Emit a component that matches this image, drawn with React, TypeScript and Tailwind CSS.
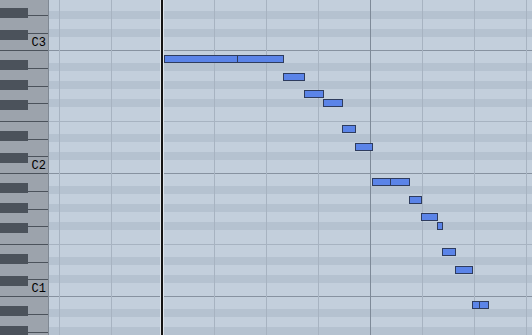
import React from "react";

// grid rows from the top: l = light row, d = black-key row, c = octave line, e = E-F line
const rows: [string, number][] = [
  ["l", 11], ["d", 8], ["l", 10], ["d", 8],
  ["l", 13], ["c", 1], ["l", 12], ["d", 8], ["l", 10], ["d", 8], ["l", 10], ["d", 8],
  ["l", 14], ["e", 1], ["l", 12], ["d", 8], ["l", 10], ["d", 8],
  ["l", 13], ["c", 1], ["l", 12], ["d", 8], ["l", 10], ["d", 8], ["l", 10], ["d", 8],
  ["l", 14], ["e", 1], ["l", 12], ["d", 8], ["l", 10], ["d", 8],
  ["l", 13], ["c", 1], ["l", 12], ["d", 8], ["l", 10], ["d", 8],
];

// white key boundaries on the keyboard
const keyLines = [0, 15, 33, 50, 68, 86, 103, 121, 139, 156, 173, 191, 209, 226, 244, 262, 279, 296, 314, 332, 335];
const labels: Record<number, string> = { 33: "C3", 156: "C2", 279: "C1" };
const blackKeys = [8, 30, 60, 80, 100, 131, 153, 183, 203, 223, 254, 276, 306, 326];

// x offsets inside the grid (grid starts at x=49)
const beatLines = [10, 62, 165, 217, 269, 373, 425, 477];
const barLines = [321];

// [left, right, top] in page pixels
const notes: [number, number, number][] = [
  [164, 238, 55], [237, 284, 55],
  [283, 305, 73],
  [304, 324, 90],
  [323, 343, 99],
  [342, 356, 125],
  [355, 373, 143],
  [372, 391, 178], [390, 410, 178],
  [409, 422, 196],
  [421, 438, 213],
  [437, 443, 222],
  [442, 456, 248],
  [455, 473, 266],
  [472, 480, 301], [479, 489, 301],
];

const rowColor: Record<string, string> = {
  l: "bg-[#c3cfdc]",
  d: "bg-[#b5c2d0]",
  c: "bg-[#8792a0]",
  e: "bg-[#a7b3c1]",
};

const Keyboard = () => (
  <div className="relative w-[48px] h-full bg-[#9ca3ac] flex flex-col">
    {keyLines.slice(0, -1).map((y, i) => (
      <div
        key={y}
        className={
          "flex justify-end items-end pr-[2px] " +
          (i === 0 ? "" : "border-t border-[#4b525b]")
        }
        style={{ height: keyLines[i + 1] - y }}
      >
        {labels[y] && (
          <span className="text-[12px] leading-none mb-[1px] text-black font-['Liberation_Mono',monospace]">
            {labels[y]}
          </span>
        )}
      </div>
    ))}
    {blackKeys.map((y) => (
      <div key={y} className="absolute left-0 w-[28px] h-[10px] bg-[#4b525b]" style={{ top: y }} />
    ))}
  </div>
);

const Grid = () => (
  <div className="relative flex-1 h-full flex flex-col overflow-hidden">
    {rows.map(([t, h], i) => (
      <div key={i} className={rowColor[t]} style={{ height: h }} />
    ))}
    {beatLines.map((x) => (
      <div key={x} className="absolute top-0 bottom-0 w-px bg-[#a7b3c1]" style={{ left: x }} />
    ))}
    {barLines.map((x) => (
      <div key={x} className="absolute top-0 bottom-0 w-px bg-[#7e8a98]" style={{ left: x }} />
    ))}
    {/* now line */}
    <div className="absolute top-0 bottom-0 left-[111px] w-[4px] flex">
      <div className="w-px bg-[#dfe5eb]" />
      <div className="w-[2px] bg-[#141414]" />
      <div className="w-px bg-[#dfe5eb]" />
    </div>
    {notes.map(([a, b, y], i) => (
      <div
        key={i}
        className="absolute h-[8px] bg-[#5b84e8] border border-[#2e3c5e]"
        style={{ left: a - 49, width: b - a, top: y }}
      />
    ))}
  </div>
);

export default function App() {
  return (
    <div className="w-[532px] h-[335px] flex overflow-hidden">
      <Keyboard />
      <div className="w-px h-full bg-[#7f8893]" />
      <Grid />
    </div>
  );
}
